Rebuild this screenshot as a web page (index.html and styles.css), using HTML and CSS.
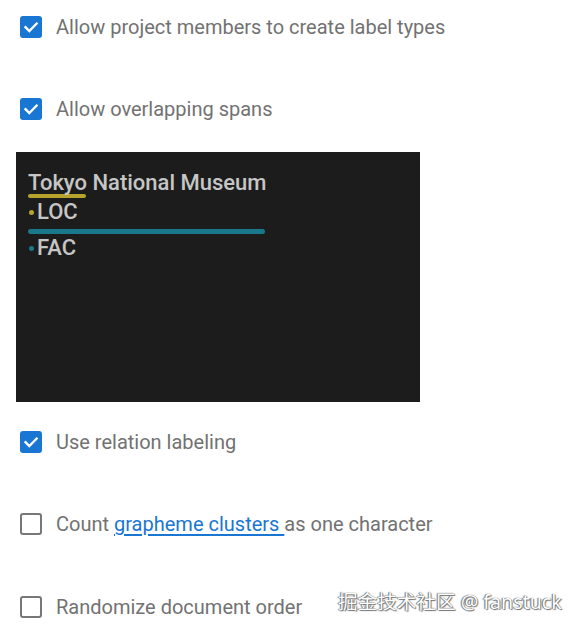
FILE: index.html
```html
<!DOCTYPE html>
<html>
<head>
<meta charset="utf-8">
<link rel="stylesheet" href="styles.css">
</head>
<body>
<div class="settings">
  <label class="option">
    <span class="box checked"><svg viewBox="0 0 22 22" width="22" height="22"><path d="M5.5 11.2 L9.3 15 L16.6 7.6" fill="none" stroke="#fff" stroke-width="2.4" stroke-linecap="square"/></svg></span>
    <span class="text">Allow project members to create label types</span>
  </label>
  <label class="option second">
    <span class="box checked"><svg viewBox="0 0 22 22" width="22" height="22"><path d="M5.5 11.2 L9.3 15 L16.6 7.6" fill="none" stroke="#fff" stroke-width="2.4" stroke-linecap="square"/></svg></span>
    <span class="text">Allow overlapping spans</span>
  </label>
  <div class="preview">
    <div class="line">Tokyo National Museum</div>
    <div class="bar yellow"></div>
    <div class="line tag"><span class="dot yellow"></span>LOC</div>
    <div class="bar teal"></div>
    <div class="line tag"><span class="dot teal"></span>FAC</div>
  </div>
  <label class="option third">
    <span class="box checked"><svg viewBox="0 0 22 22" width="22" height="22"><path d="M5.5 11.2 L9.3 15 L16.6 7.6" fill="none" stroke="#fff" stroke-width="2.4" stroke-linecap="square"/></svg></span>
    <span class="text">Use relation labeling</span>
  </label>
  <label class="option rest">
    <span class="box"></span>
    <span class="text">Count <a class="link" href="#">grapheme clusters </a>as one character</span>
  </label>
  <div class="option rest last">
    <span class="box"></span>
    <span class="text">Randomize document order</span>
    <span class="watermark">掘金技术社区 @ fanstuck</span>
  </div>
</div>
</body>
</html>
```
FILE: styles.css
```css
html, body {
  margin: 0;
  padding: 0;
  background: #fff;
}
.settings {
  display: flex;
  flex-direction: column;
  padding: 15px 0 0 16px;
  font-family: Roboto, "Noto Sans", sans-serif;
}
.option {
  display: flex;
  align-items: center;
  height: 24px;
  padding-left: 4px;
  gap: 14px;
}
.option.second { margin-top: 58px; }
.option.third { margin-top: 28px; }
.option.rest { margin-top: 58px; }
.option.last { margin-top: 59px; position: relative; }
.box {
  width: 22px;
  height: 22px;
  box-sizing: border-box;
  border-radius: 3px;
  border: 2.5px solid #777;
  flex: none;
  display: flex;
}
.box.checked {
  background: #1976d2;
  border: none;
}
.text {
  font-size: 20px;
  color: #727272;
  white-space: nowrap;
}
.link {
  color: #1976d2;
  text-decoration: underline;
  text-underline-offset: 3px;
}
.preview {
  margin-top: 31px;
  width: 404px;
  height: 250px;
  background: #1c1c1c;
  box-sizing: border-box;
  padding: 19px 0 0 12px;
  color: #c6c6c6;
  font-size: 22px;
  font-weight: 500;
}
.line {
  line-height: 24px;
  height: 24px;
}
.tag {
  display: flex;
  align-items: center;
  margin-top: 2px;
}
.bar {
  border-radius: 3px;
}
.bar.yellow {
  width: 58px;
  height: 4px;
  margin-top: -1px;
  background: #b7a42c;
}
.bar.teal {
  width: 237px;
  height: 5px;
  margin-top: 5px;
  background: #19798a;
}
.dot {
  width: 5px;
  height: 5px;
  border-radius: 50%;
  margin: 0 3px 0 1px;
}
.dot.yellow { background: #b7a42c; }
.dot.teal { background: #19798a; }
.watermark {
  position: absolute;
  left: 322px;
  top: -9px;
  font-family: "Noto Sans", "Noto Sans CJK SC", sans-serif;
  font-size: 19.6px;
  color: #fff;
  white-space: nowrap;
  text-shadow: 0 0 1px #555, 1px 1px 1px #777, -1px 0 1px #777;
}
```
